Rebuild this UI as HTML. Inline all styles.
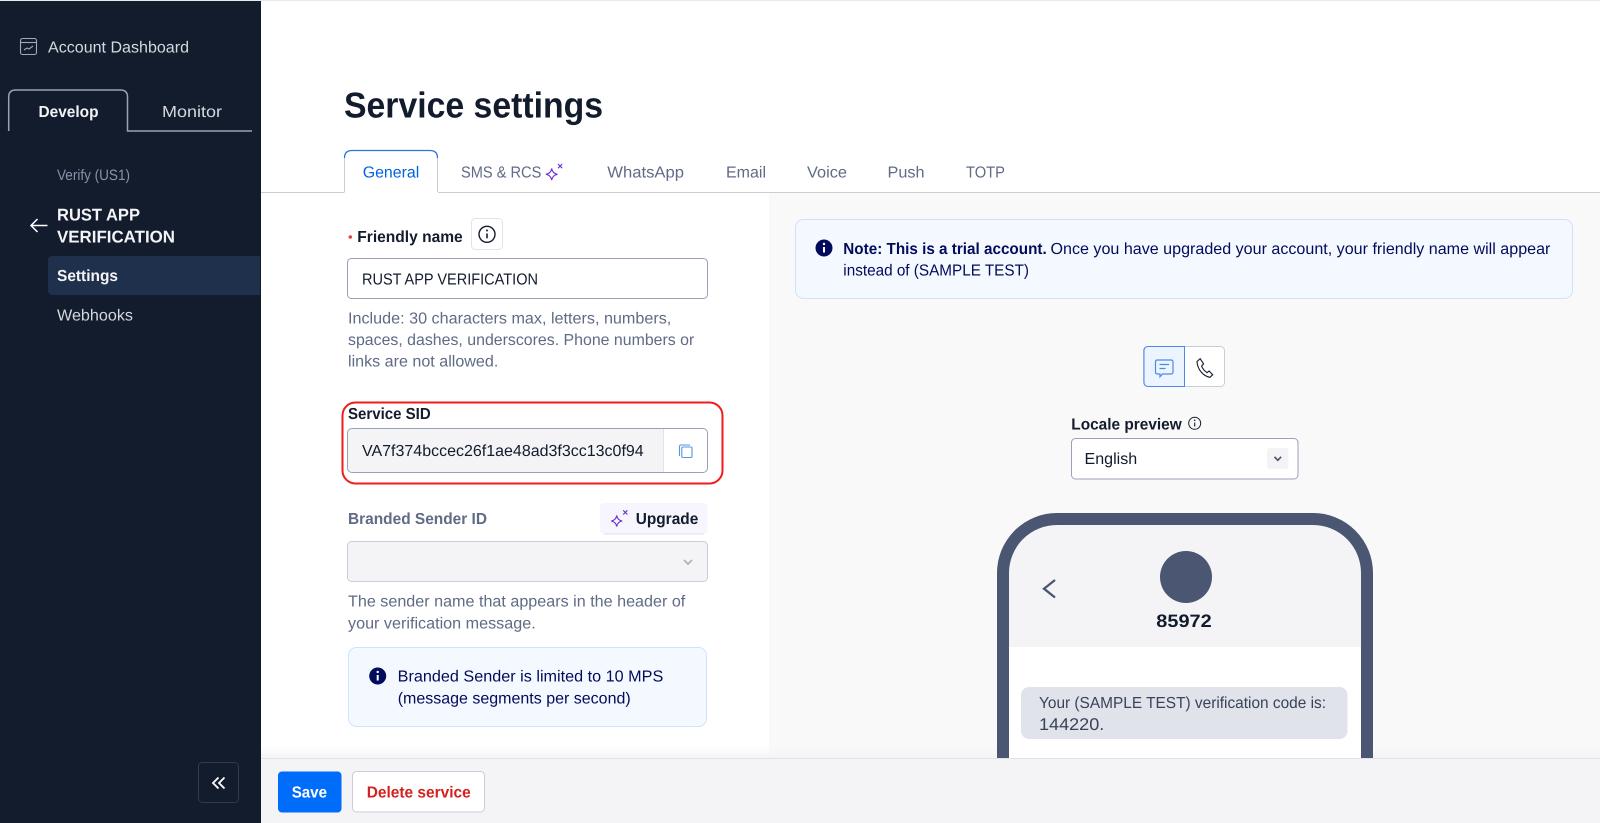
<!DOCTYPE html>
<html lang="en"><head><meta charset="utf-8"><title>Service settings</title>
<style>
html,body{margin:0;padding:0;background:#fff;width:1600px;height:823px;overflow:hidden}
svg{display:block;filter:blur(.3px)}
text{font-family:"Liberation Sans",sans-serif;font-size:16px;text-rendering:geometricPrecision}
.b{font-weight:700}
</style></head><body>
<svg xmlns="http://www.w3.org/2000/svg" width="1600" height="823" viewBox="0 0 1600 823">
<defs><linearGradient id="fade" x1="0" y1="0" x2="0" y2="1"><stop offset="0" stop-color="#f4f4f6" stop-opacity="0"/><stop offset="1" stop-color="#f4f4f6"/></linearGradient></defs>
<rect width="1600" height="823" fill="#fff"/>
<rect width="1600" height="1" fill="#e8e9ec"/>
<!-- right panel -->
<rect x="769" y="193" width="831" height="565" fill="#f9f9fa"/>
<rect x="261" y="746" width="1339" height="12" fill="url(#fade)"/>
<!-- sidebar -->
<rect x="0" y="1" width="261" height="822" fill="#121c2d"/>
<g fill="none" stroke="#a3a9bb" stroke-width="1.100"><rect x="20.500" y="38.500" width="16" height="16" rx="2"/><path d="M20.500 42.500H36.500"/><path d="M24 50l3-2 2 1 4-3"/></g>
<text x="48" y="52.500" fill="#d4d7df" textLength="141" lengthAdjust="spacingAndGlyphs">Account Dashboard</text>
<path d="M8.700 131V97q0-7 7-7H120.500q7 0 7 7V131H252" fill="none" stroke="#9aa1b5" stroke-width="1.500"/>
<text class="b" x="38.500" y="117" fill="#f4f4f6" textLength="60" lengthAdjust="spacingAndGlyphs">Develop</text>
<text x="162" y="117" fill="#d4d7df" textLength="60" lengthAdjust="spacingAndGlyphs">Monitor</text>
<text x="57" y="180" fill="#8891aa" style="font-size:15px" textLength="73" lengthAdjust="spacingAndGlyphs">Verify (US1)</text>
<path d="M47.500 225.500H31M37.500 219l-6.500 6.500 6.500 6.500" fill="none" stroke="#fff" stroke-width="1.500"/>
<text class="b" x="57" y="220.500" fill="#f4f4f6" style="font-size:17px" textLength="83" lengthAdjust="spacingAndGlyphs">RUST APP</text>
<text class="b" x="57" y="242.500" fill="#f4f4f6" style="font-size:17px" textLength="118" lengthAdjust="spacingAndGlyphs">VERIFICATION</text>
<path d="M52 256H260V295H52a4 4 0 0 1-4-4V260a4 4 0 0 1 4-4z" fill="#1f304c"/>
<text class="b" x="57" y="281" fill="#f4f4f6" textLength="61" lengthAdjust="spacingAndGlyphs">Settings</text>
<text x="57" y="320.500" fill="#d4d7df" textLength="76" lengthAdjust="spacingAndGlyphs">Webhooks</text>
<rect x="198.500" y="762.500" width="40" height="40" rx="4" fill="none" stroke="#2f3a4f" stroke-width="1"/>
<path d="M218.500 777.500l-5.500 5.500 5.500 5.500M224.500 777.500l-5.500 5.500 5.500 5.500" fill="none" stroke="#fff" stroke-width="1.800"/>
<!-- title -->
<text class="b" x="344" y="117.500" fill="#121c2d" style="font-size:36px" textLength="259" lengthAdjust="spacingAndGlyphs">Service settings</text>
<!-- tabs -->
<path d="M261 192.500H344.500M438 192.500H1600" stroke="#cacdd8" stroke-width="1" fill="none"/>
<path d="M344.500 192V158q0-7.500 7.500-7.500H430q7.500 0 7.500 7.500V192" fill="#fff" stroke="#cacdd8"/>
<path d="M344.500 158q0-7.500 7.500-7.500H430q7.500 0 7.500 7.500" fill="none" stroke="#2b74e0" stroke-width="1.300"/>
<text x="362.700" y="177.300" fill="#0263e0" textLength="56.600" lengthAdjust="spacingAndGlyphs">General</text>
<text x="461" y="177.300" fill="#606b85" textLength="80.300" lengthAdjust="spacingAndGlyphs">SMS &amp; RCS</text>
<g fill="none" stroke="#6d2ed1" stroke-width="1.100"><path d="M551.700 168.500q.8 5 5.800 5.800q-5 .8-5.800 5.800q-.8-5-5.800-5.800q5-.8 5.800-5.800z"/><path d="M558 164l4.200 4.200m0-4.200l-4.200 4.200"/></g>
<text x="607.300" y="177.300" fill="#606b85" textLength="76.700" lengthAdjust="spacingAndGlyphs">WhatsApp</text>
<text x="726" y="177.300" fill="#606b85" textLength="40" lengthAdjust="spacingAndGlyphs">Email</text>
<text x="807" y="177.300" fill="#606b85" textLength="40" lengthAdjust="spacingAndGlyphs">Voice</text>
<text x="887.500" y="177.300" fill="#606b85" textLength="37" lengthAdjust="spacingAndGlyphs">Push</text>
<text x="966" y="177.300" fill="#606b85" textLength="39" lengthAdjust="spacingAndGlyphs">TOTP</text>
<!-- friendly name -->
<circle cx="350.300" cy="237" r="1.800" fill="#e8453c"/>
<text class="b" x="357.300" y="242" fill="#121c2d" textLength="105.400" lengthAdjust="spacingAndGlyphs">Friendly name</text>
<rect x="471.500" y="218.500" width="31" height="31" rx="4" fill="#fff" stroke="#e1e3ea"/>
<circle cx="487" cy="234.300" r="8" fill="none" stroke="#121c2d" stroke-width="1.400"/>
<path d="M487 233.500v4.800" stroke="#121c2d" stroke-width="1.600"/><circle cx="487" cy="230.500" r="1" fill="#121c2d"/>
<rect x="347.500" y="258.500" width="360" height="40" rx="4" fill="#fff" stroke="#9aa1b5"/>
<text x="362" y="284.300" fill="#121c2d" textLength="176" lengthAdjust="spacingAndGlyphs">RUST APP VERIFICATION</text>
<text x="348" y="323.300" fill="#606b85" textLength="323.300" lengthAdjust="spacingAndGlyphs">Include: 30 characters max, letters, numbers,</text>
<text x="348" y="345" fill="#606b85" textLength="346.300" lengthAdjust="spacingAndGlyphs">spaces, dashes, underscores. Phone numbers or</text>
<text x="348" y="366.700" fill="#606b85" textLength="150.300" lengthAdjust="spacingAndGlyphs">links are not allowed.</text>
<!-- service sid -->
<rect x="342.500" y="402.500" width="380" height="81" rx="13" fill="#fff" stroke="#ee1c1c" stroke-width="2"/>
<text class="b" x="348" y="419" fill="#121c2d" textLength="82.700" lengthAdjust="spacingAndGlyphs">Service SID</text>
<path d="M352 428.500H663V472.500H352a4.500 4.500 0 0 1-4.500-4.500V433a4.500 4.500 0 0 1 4.500-4.500z" fill="#f4f4f6"/>
<rect x="347.500" y="428.500" width="360" height="44" rx="4.500" fill="none" stroke="#9aa1b5"/>
<path d="M663.500 429V472" stroke="#e1e3ea"/>
<text x="362" y="456" fill="#121c2d" textLength="281.700" lengthAdjust="spacingAndGlyphs">VA7f374bccec26f1ae48ad3f3cc13c0f94</text>
<g fill="none" stroke="#5a93e6" stroke-width="1.100"><path d="M679.500 456v-9.500q0-1.500 1.500-1.500h9"/><rect x="681.800" y="447" width="10.200" height="10.500" rx="1.200"/></g>
<!-- branded -->
<text class="b" x="348" y="524" fill="#606b85" textLength="139" lengthAdjust="spacingAndGlyphs">Branded Sender ID</text>
<rect x="600" y="503" width="107.500" height="31" rx="4" fill="#f7f5fe"/>
<path d="M604 534h99.500" stroke="#e2d9f7" stroke-width="1"/>
<g fill="none" stroke="#6d2ed1" stroke-width="1.100"><path d="M616.700 515.500q.8 4.700 5.500 5.500q-4.700 .8-5.500 5.500q-.8-4.700-5.500-5.500q4.700-.8 5.500-5.500z"/><path d="M623.200 510.300l4.200 4.200m0-4.200l-4.200 4.200"/></g>
<text class="b" x="635.700" y="524" fill="#121c2d" textLength="62.600" lengthAdjust="spacingAndGlyphs">Upgrade</text>
<rect x="347.500" y="541.500" width="360" height="40" rx="4" fill="#f4f4f6" stroke="#cacdd8"/>
<path d="M684 560l4 4 4-4" fill="none" stroke="#aeb2c1" stroke-width="1.800"/>
<text x="348" y="606.700" fill="#606b85" textLength="337.300" lengthAdjust="spacingAndGlyphs">The sender name that appears in the header of</text>
<text x="348" y="628.300" fill="#606b85" textLength="187.700" lengthAdjust="spacingAndGlyphs">your verification message.</text>
<rect x="348.500" y="647.500" width="358" height="79" rx="8" fill="#f4f9ff" stroke="#cce4ff"/>
<circle cx="377.700" cy="676" r="8.500" fill="#030b5d"/>
<path d="M377.700 675v5.500" stroke="#fff" stroke-width="2"/><circle cx="377.700" cy="672" r="1.200" fill="#fff"/>
<text x="397.700" y="681.700" fill="#030b5d" textLength="265.600" lengthAdjust="spacingAndGlyphs">Branded Sender is limited to 10 MPS</text>
<text x="397.700" y="703.300" fill="#030b5d" textLength="233" lengthAdjust="spacingAndGlyphs">(message segments per second)</text>
<!-- note -->
<rect x="795.500" y="219.500" width="777" height="79" rx="8" fill="#f4f9ff" stroke="#cce4ff"/>
<circle cx="824" cy="248" r="8.500" fill="#030b5d"/>
<path d="M824 247v5.500" stroke="#fff" stroke-width="2"/><circle cx="824" cy="244" r="1.200" fill="#fff"/>
<text class="b" x="843.300" y="254" fill="#030b5d" textLength="203.400" lengthAdjust="spacingAndGlyphs">Note: This is a trial account.</text>
<text x="1050.500" y="254" fill="#030b5d" textLength="499.900" lengthAdjust="spacingAndGlyphs">Once you have upgraded your account, your friendly name will appear</text>
<text x="843.300" y="275.700" fill="#030b5d" textLength="185.700" lengthAdjust="spacingAndGlyphs">instead of (SAMPLE TEST)</text>
<!-- toggle -->
<rect x="1143.500" y="346.500" width="81" height="40" rx="4" fill="#fff" stroke="#cacdd8"/>
<path d="M1148 346.500H1184.500V386.500H1148a4 4 0 0 1-4-4V350.500a4 4 0 0 1 4-4z" fill="#ebf4ff" stroke="#4a8ae6"/>
<g fill="none" stroke="#4a8ae6" stroke-width="1.200"><path d="M1157.500 360h13.500q2 0 2 2v10q0 2-2 2h-8.500l-2.500 2.800v-2.800h-2.500q-2 0-2-2v-10q0-2 2-2z"/><path d="M1159.500 364.500h9.500M1159.500 368.500h6"/></g>
<path d="M1197 361.500l3.200-2.800 3.400 5.200-2 2.200c1 2.800 3 5 5.500 6.600l2-1.700 3.600 3.700-2.700 2.600c-6.500-.8-12.700-8-13-15.800z" fill="none" stroke="#121c2d" stroke-width="1.100"/>
<!-- locale -->
<text class="b" x="1071.300" y="429.300" fill="#121c2d" textLength="110.400" lengthAdjust="spacingAndGlyphs">Locale preview</text>
<circle cx="1194.700" cy="423.300" r="6" fill="none" stroke="#121c2d" stroke-width="1"/>
<path d="M1194.700 422.500v4" stroke="#121c2d" stroke-width="1.100"/><circle cx="1194.700" cy="420.300" r=".8" fill="#121c2d"/>
<rect x="1071.500" y="438.500" width="226.500" height="40.500" rx="4" fill="#fff" stroke="#9aa1b5"/>
<text x="1084.500" y="464" fill="#121c2d" textLength="52.700" lengthAdjust="spacingAndGlyphs">English</text>
<rect x="1267" y="448" width="21.500" height="21" rx="3" fill="#f4f4f6"/>
<path d="M1274.500 456.800l3.300 3.500 3.300-3.500" fill="none" stroke="#4a5672" stroke-width="1.700"/>
<!-- phone -->
<path d="M1003 800V573a54 54 0 0 1 54-54H1313a54 54 0 0 1 54 54V800Z" fill="#fff"/>
<path d="M1009 647V573a48 48 0 0 1 48-48H1313a48 48 0 0 1 48 48V647Z" fill="#f4f4f6"/>
<path d="M1003 800V573a54 54 0 0 1 54-54H1313a54 54 0 0 1 54 54V800" fill="none" stroke="#4a5672" stroke-width="12"/>
<circle cx="1186" cy="577" r="26" fill="#4a5672"/>
<path d="M1055 580l-11 8.700 11 8.800" fill="none" stroke="#4a5672" stroke-width="2.300"/>
<text class="b" x="1156.300" y="627" fill="#121c2d" style="font-size:18px" textLength="55.400" lengthAdjust="spacingAndGlyphs">85972</text>
<rect x="1021" y="687" width="326.500" height="52" rx="8" fill="#e1e3ea"/>
<text x="1039" y="708" fill="#39435a" textLength="287" lengthAdjust="spacingAndGlyphs">Your (SAMPLE TEST) verification code is:</text>
<text x="1039" y="730" fill="#39435a" style="font-size:17px" textLength="65.300" lengthAdjust="spacingAndGlyphs">144220.</text>
<!-- footer -->
<rect x="261" y="758" width="1339" height="65" fill="#f4f4f6"/>
<path d="M261 758.500H1600" stroke="#e1e3ea"/>
<rect x="278" y="771.500" width="63.500" height="41" rx="4" fill="#006dfa"/>
<text class="b" x="291.700" y="797.700" fill="#fff" textLength="35.300" lengthAdjust="spacingAndGlyphs">Save</text>
<rect x="352.500" y="771.500" width="132" height="40.500" rx="4" fill="#fff" stroke="#cacdd8"/>
<text class="b" x="366.700" y="797.700" fill="#d61f1f" textLength="104" lengthAdjust="spacingAndGlyphs">Delete service</text>
</svg>
</body></html>
